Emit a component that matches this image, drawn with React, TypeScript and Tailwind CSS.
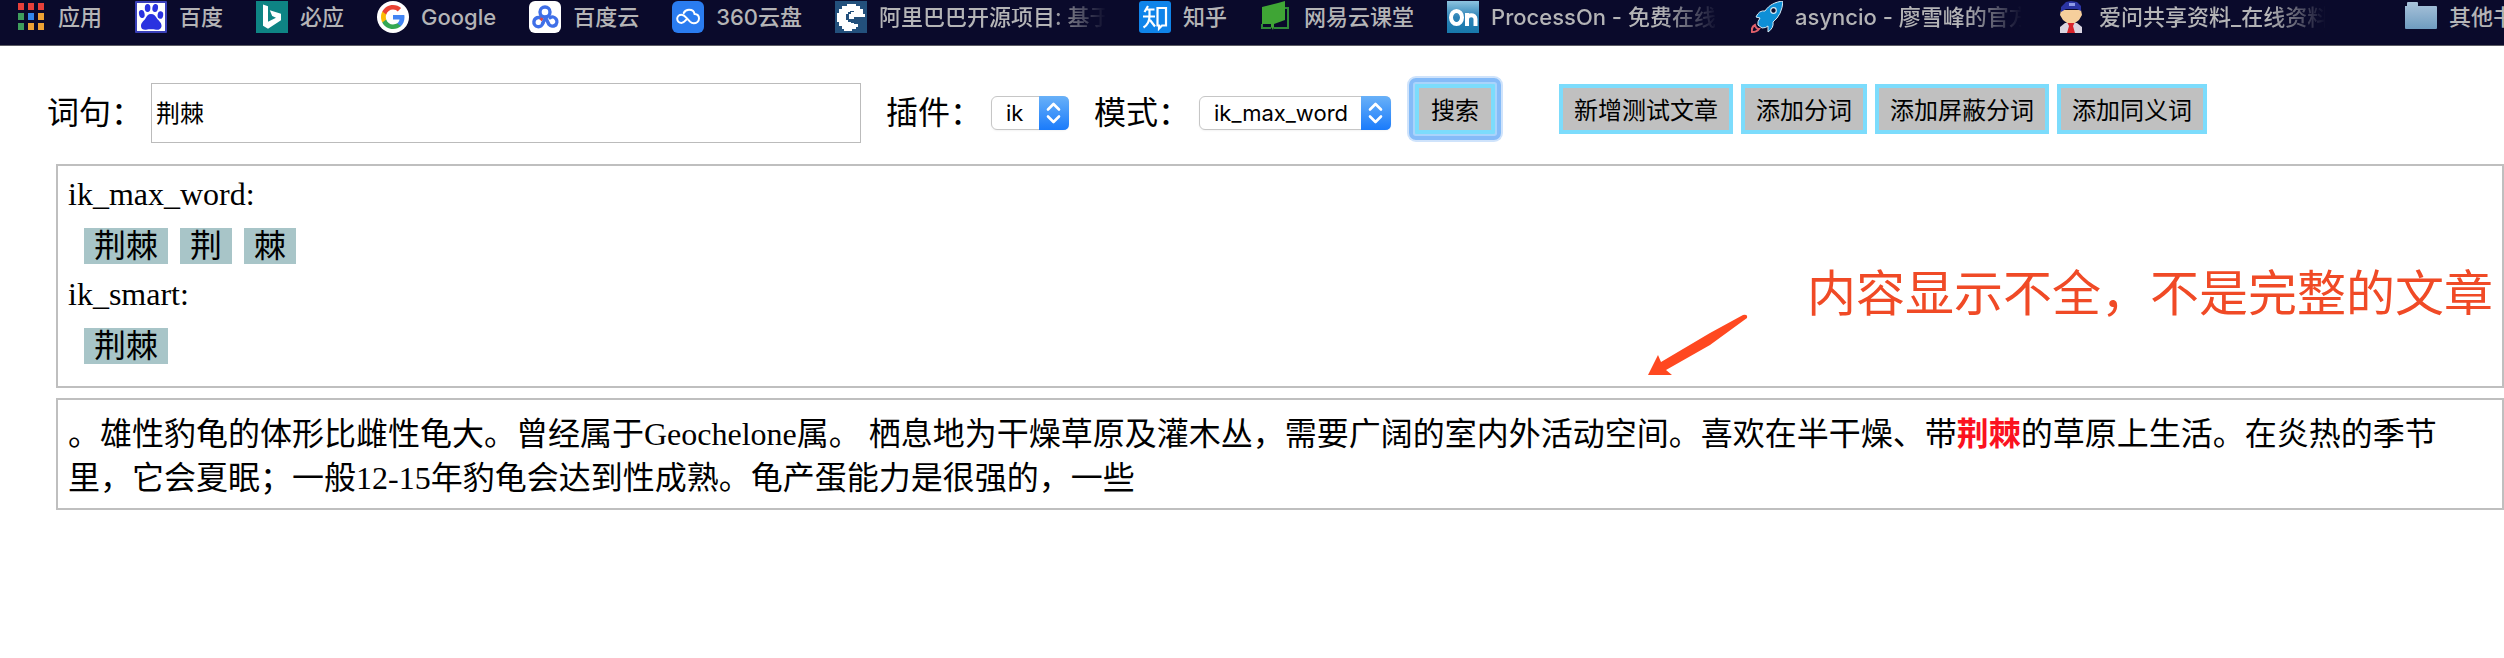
import type { ReactNode } from "react";

function AppsIcon() {
  const cells = ["#e8403a", "#e8403a", "#e8403a", "#3f9e5c", "#3387ea", "#eda234", "#3f9e5c", "#eda234", "#eda234"];
  return (
    <svg viewBox="0 0 32 32" className="size-8">
      {cells.map((c, i) => (
        <rect key={i} x={4 + (i % 3) * 10} y={2 + Math.floor(i / 3) * 10} width="6" height="7" fill={c} />
      ))}
    </svg>
  );
}

function BaiduIcon() {
  return (
    <svg viewBox="0 0 32 32" className="size-8">
      <rect width="32" height="32" rx="1" fill="#3a40b8" />
      <rect x="2" y="2" width="28" height="28" fill="#fff" />
      <g fill="#2a32e0">
        <ellipse cx="12.600" cy="7" rx="2.800" ry="4" />
        <ellipse cx="20.200" cy="7" rx="2.800" ry="4" transform="rotate(10 20.200 7)" />
        <ellipse cx="6.800" cy="13" rx="2.800" ry="4" transform="rotate(-12 6.800 13)" />
        <ellipse cx="25.400" cy="14" rx="2.800" ry="3.800" transform="rotate(8 25.400 14)" />
        <path d="M16 13c3 0 4.500 2 6 4.500 2 2.500 5 4.500 4.500 8-.5 3.200-3.500 3.500-5.500 3.200-3.500-.5-6.500-.5-10 0-2.500.3-4.800-.5-5-3.500-.2-3.500 2.500-5 4.300-7.500C12 15 13 13 16 13z" />
      </g>
    </svg>
  );
}

function BingIcon() {
  return (
    <svg viewBox="0 0 32 32" className="size-8">
      <rect width="32" height="32" fill="#0e8484" />
      <path d="M7 3.500l5 1.700v15.500l8-4-3.800-1.800-2.400-5.700L25 12.800v6.500L12 27.800l-5-3z" fill="#fff" />
    </svg>
  );
}

function GoogleIcon() {
  return (
    <svg viewBox="0 0 32 32" className="size-8">
      <circle cx="16" cy="16" r="16" fill="#fff" />
      <g transform="translate(4 4)">
        <path fill="#4285f4" d="M23.500 12.300c0-.9-.1-1.500-.2-2.200H12v4.500h6.500c-.1 1.100-.8 2.700-2.400 3.800v2.900h3.700c2.300-2.100 3.700-5.200 3.700-9z" />
        <path fill="#34a853" d="M12 24c3.200 0 6-1.100 7.900-2.900l-3.800-2.900c-1 .7-2.400 1.200-4.100 1.200-3.200 0-5.900-2.100-6.800-5H1.300v3C3.300 21.300 7.300 24 12 24z" />
        <path fill="#fbbc05" d="M5.200 14.400c-.2-.8-.4-1.600-.4-2.400s.1-1.600.4-2.400V6.600H1.300C.5 8.200 0 10 0 12s.5 3.800 1.300 5.400z" />
        <path fill="#ea4335" d="M12 4.600c2.300 0 3.800 1 4.700 1.800L20.100 3C18 1.100 15.200 0 12 0 7.300 0 3.300 2.700 1.300 6.600l3.900 3c1-2.900 3.600-5 6.800-5z" />
      </g>
    </svg>
  );
}

function BaiduCloudIcon() {
  return (
    <svg viewBox="0 0 32 32" className="size-8">
      <rect width="32" height="32" rx="6" fill="#fff" />
      <path d="M10.500 14l5 1.500-2.500 5-3-2.500z" fill="#e0413e" />
      <g fill="none" stroke="#3f6fe8" strokeWidth="3.400" strokeLinecap="round">
        <circle cx="16" cy="11" r="5" />
        <path d="M14 22a4.600 4.600 0 1 1-4-5.500" />
        <path d="M17 16.500L15 20l-1.500 2.500" />
        <path d="M16.500 16.500L20 23.500a4.500 4.500 0 1 0 1-6.800M25 25l2-1" />
      </g>
    </svg>
  );
}

function Cloud360Icon() {
  return (
    <svg viewBox="0 0 32 32" className="size-8">
      <rect width="32" height="32" rx="6" fill="#2a7cf0" />
      <path
        d="M14.500 18.500c-1.800 2-3 3.400-5 3.400-2.500 0-4.300-1.800-4.300-4.100S7 13.700 9.500 13.700c2.200 0 3.400 1.300 5 3.100l3.500 3.800c1 1 2.200 1.700 3.700 1.700 2.800 0 5.300-2 5.300-4.700 0-2.500-1.800-4.300-4.400-4.500C22.200 10.300 19.800 8.800 17 8.800c-2.500 0-4.300 1.200-5.300 3.200"
        fill="none"
        stroke="#fff"
        strokeWidth="2"
        strokeLinecap="round"
      />
    </svg>
  );
}

function AlibabaProjectIcon() {
  return (
    <svg viewBox="0 0 32 32" className="size-8">
      <rect width="32" height="32" fill="#23507c" />
      <path d="M12 3h9v2h4v3h3v5h2v3H19v2h-3v-2h-2v-3h2v-2h3v-1h-4v1h-2v2h-2v6h2v2h3v1h3v1h4v3h-2v2h-4v2h-8v-2H7v-3H4v-4H2v-9h2V8h3V5h5z" fill="#fff" />
      <rect x="14" y="13" width="5" height="5" fill="#fff" />
    </svg>
  );
}

function ZhihuIcon() {
  return (
    <svg viewBox="0 0 32 32" className="size-8">
      <rect width="32" height="32" rx="3" fill="#0f84ea" />
      <g fill="none" stroke="#fff" strokeWidth="2.200">
        <path d="M9 5L5.500 11M7 8.500h8.500M10.500 8.500v6.500c0 5-2 9-6 11.500M4 15.500h12M11 19l5 6.500" />
        <path d="M18.500 7h8.500v17.500h-4l-3 3v-3h-1.500z" />
      </g>
    </svg>
  );
}

function NeteaseIcon() {
  return (
    <svg viewBox="0 0 32 32" className="size-8">
      <path d="M25 7h3v20H14M2 23v4h9" fill="none" stroke="#2f8a38" strokeWidth="2" />
      <path d="M2 6L18 2l7-2v19l-11 4v3l-1 3-2-3v-3H2z" fill="#3fa535" />
    </svg>
  );
}

function ProcessOnIcon() {
  return (
    <svg viewBox="0 0 32 32" className="size-8">
      <defs>
        <linearGradient id="po" x1="0" y1="0" x2="0" y2="1">
          <stop offset="0" stopColor="#8ec4df" />
          <stop offset="0.500" stopColor="#2c82b6" />
          <stop offset="1" stopColor="#1778ab" />
        </linearGradient>
      </defs>
      <rect width="32" height="32" fill="url(#po)" />
      <ellipse cx="9.500" cy="16.500" rx="5.500" ry="6.500" fill="none" stroke="#fff" strokeWidth="4" />
      <path d="M20 25V12M20 18c0-5 8.500-5 8.500 0v7" fill="none" stroke="#fff" strokeWidth="4" />
    </svg>
  );
}

function RocketIcon() {
  return (
    <svg viewBox="0 0 32 32" className="size-8">
      <path d="M4 24q-4 2-3 7 5 0 7-3-3 0-4-4z" fill="#0a0a2b" stroke="#e0606a" strokeWidth="2" />
      <path d="M32 0C24 1 18 4 14 10q-6-1-9 6l4 1q-3 4-2 7l4 3q4 0 6-2v6q6-4 5-10Q31 14 32 0z" fill="#0e8fd6" stroke="#d9ecf6" strokeWidth="1" />
      <circle cx="22.500" cy="9.500" r="2.800" fill="#0a0a2b" stroke="#d9ecf6" strokeWidth="1.200" />
    </svg>
  );
}

function AskIcon() {
  return (
    <svg viewBox="0 0 32 32" className="size-8">
      <path d="M5 32v-6l5-4h12l5 4v6z" fill="#d9d4e0" />
      <path d="M12 21h8l-2 4 2 7h-8l2-7z" fill="#d8232b" />
      <path d="M6 9h20l1 5-3 5-4 3h-8l-4-3-3-5z" fill="#f6cf9c" />
      <path d="M11 1l5-1 6 1 4 4v5l-4-2H11l-5 3V6z" fill="#2b35a4" />
      <path d="M14 2h6v3h-6z" fill="#8f9be6" />
    </svg>
  );
}

function FolderIcon() {
  return (
    <svg viewBox="0 0 32 32" className="size-8">
      <defs>
        <linearGradient id="fd" x1="0" y1="0" x2="0" y2="1">
          <stop offset="0" stopColor="#a9c3da" />
          <stop offset="1" stopColor="#6f9cc0" />
        </linearGradient>
      </defs>
      <path d="M0 5h2V2q0-1 1-1h9q1 0 1 1v3h18q1 0 1 1v21q0 1-1 1H1q-1 0-1-1z" fill="url(#fd)" />
    </svg>
  );
}

type Mark = { label: string; icon: ReactNode; long?: boolean };

const marks: Mark[] = [
  { label: "应用", icon: <AppsIcon /> },
  { label: "百度", icon: <BaiduIcon /> },
  { label: "必应", icon: <BingIcon /> },
  { label: "Google", icon: <GoogleIcon /> },
  { label: "百度云", icon: <BaiduCloudIcon /> },
  { label: "360云盘", icon: <Cloud360Icon /> },
  { label: "阿里巴巴开源项目: 基于", icon: <AlibabaProjectIcon />, long: true },
  { label: "知乎", icon: <ZhihuIcon /> },
  { label: "网易云课堂", icon: <NeteaseIcon /> },
  { label: "ProcessOn - 免费在线作", icon: <ProcessOnIcon />, long: true },
  { label: "asyncio - 廖雪峰的官方", icon: <RocketIcon />, long: true },
  { label: "爱问共享资料_在线资料", icon: <AskIcon />, long: true },
];

const longLabel = "block w-[227px] overflow-hidden [mask-image:linear-gradient(to_right,black_75%,transparent_100%)]";

function BookmarksBar() {
  return (
    <nav className="flex h-[46px] items-start overflow-hidden border-b border-[#5c5c64] bg-[#0a0a2b] pl-[14px] font-['Inter','Noto_Sans_CJK_SC',sans-serif] text-[22px] leading-8 font-medium whitespace-nowrap text-[#b4b4b6]">
      <div className="flex shrink-0 gap-[33px]">
        {marks.map((m) => (
          <a key={m.label} href="#" className="flex shrink-0 gap-3 pt-px">
            {m.icon}
            <span className={m.long ? longLabel : "block"}>{m.label}</span>
          </a>
        ))}
      </div>
      <a href="#" className="ml-auto flex w-[99px] shrink-0 gap-3 overflow-hidden pt-px">
        <span className="shrink-0"><FolderIcon /></span>
        <span>其他书签</span>
      </a>
    </nav>
  );
}

function Picker({ id, options, className }: { id: string; options: string[]; className: string }) {
  return (
    <span className="relative flex">
      <select
        id={id}
        className={`h-[34px] appearance-none rounded-md border border-[#c6c6c6] bg-white pl-[14px] font-['Inter','Noto_Sans_CJK_SC',sans-serif] text-[22px] leading-7 shadow-xs ${className}`}
      >
        {options.map((o) => (
          <option key={o}>{o}</option>
        ))}
      </select>
      <svg viewBox="0 0 30 34" className="pointer-events-none absolute top-0 right-0 h-[34px] w-[30px]">
        <defs>
          <linearGradient id={`${id}-g`} x1="0" y1="0" x2="0" y2="1">
            <stop offset="0" stopColor="#69b1f8" />
            <stop offset="1" stopColor="#1a7bfb" />
          </linearGradient>
        </defs>
        <path d="M0 0h24q6 0 6 6v22q0 6-6 6H0z" fill={`url(#${id}-g)`} />
        <path d="M9 13.500l5.500-5.500 5.500 5.500M9 20.500l5.500 5.500 5.500-5.500" fill="none" stroke="#fff" strokeWidth="2.600" strokeLinecap="round" strokeLinejoin="round" />
      </svg>
    </span>
  );
}

const button =
  "h-[50px] border-4 border-[#7cdcfc] bg-[#c0c0c0] pt-1 font-['Inter','Noto_Sans_CJK_SC',sans-serif] text-2xl leading-8 whitespace-nowrap text-black";

function SearchForm() {
  return (
    <form className="flex items-center pt-[37px] pl-[47px]" onSubmit={(e) => e.preventDefault()}>
      <label htmlFor="phrase" className="w-[104px] shrink-0">词句：</label>
      <input
        id="phrase"
        defaultValue="荆棘"
        className="h-[60px] w-[710px] border border-[#bbbbbb] bg-white pb-[3px] pl-1 font-['Inter','Noto_Sans_CJK_SC',sans-serif] text-2xl outline-none"
      />
      <label htmlFor="plugin" className="ml-[25px] w-[105px] shrink-0">插件：</label>
      <Picker id="plugin" options={["ik"]} className="w-[78px]" />
      <label htmlFor="mode" className="ml-[25px] w-[105px] shrink-0">模式：</label>
      <Picker id="mode" options={["ik_max_word", "ik_smart"]} className="w-[192px]" />
      <div className="mb-2 ml-6 flex gap-16">
        <button
          type="submit"
          className={`rounded-[1px] px-3 shadow-[0_0_0_2px_#a9d4fb,0_0_0_6px_#85bbf8] outline-2 outline-offset-[6px] outline-[#cfe3fb] ${button}`}
        >
          搜索
        </button>
        <div className="flex gap-2">
          {["新增测试文章", "添加分词", "添加屏蔽分词", "添加同义词"].map((t) => (
            <button key={t} type="button" className={`px-[11px] ${button}`}>{t}</button>
          ))}
        </div>
      </div>
    </form>
  );
}

function Tokens({ name, words }: { name: string; words: string[] }) {
  return (
    <section>
      <h2 className="pl-[10px]">{name}:</h2>
      <ul className="mt-4 flex gap-3 pl-[26px]">
        {words.map((w) => (
          <li key={w} className="bg-[#a8c5c8] px-[10px]">{w}</li>
        ))}
      </ul>
    </section>
  );
}

export default function App() {
  return (
    <div className="min-h-screen overflow-hidden bg-white font-['Liberation_Serif','Noto_Sans_CJK_SC',serif] text-[32px] leading-9 text-black">
      <BookmarksBar />
      <SearchForm />
      <main className="mt-[21px] flex flex-col gap-[10px] pl-14">
        <div className="relative flex flex-col gap-3 border-2 border-[#bfbfbf] pt-[10px] pb-[22px]">
          <Tokens name="ik_max_word" words={["荆棘", "荆", "棘"]} />
          <Tokens name="ik_smart" words={["荆棘"]} />
          <p className="absolute top-[94px] right-[9px] font-['Noto_Sans_CJK_SC',sans-serif] text-[49px] leading-[60px] whitespace-nowrap text-[#f04a26]">
            内容显示不全，不是完整的文章
          </p>
          <svg viewBox="0 0 100 62" className="absolute right-[754px] bottom-[10px] h-[62px] w-[100px]">
            <path d="M0 61L10 41l3 7L62 19 95 1q5-1 4 3L62 31 18 56l6 5z" fill="#ff4820" />
          </svg>
        </div>
        <article className="border-2 border-[#bfbfbf] px-[10px] pt-3 pb-2 leading-[44px]">
          。雄性豹龟的体形比雌性龟大。曾经属于Geochelone属。 栖息地为干燥草原及灌木丛，需要广阔的室内外活动空间。喜欢在半干燥、带
          <em className="font-bold text-[#fb1220] not-italic">荆棘</em>
          的草原上生活。在炎热的季节里，它会夏眠；一般12-15年豹龟会达到性成熟。龟产蛋能力是很强的，一些
        </article>
      </main>
    </div>
  );
}
